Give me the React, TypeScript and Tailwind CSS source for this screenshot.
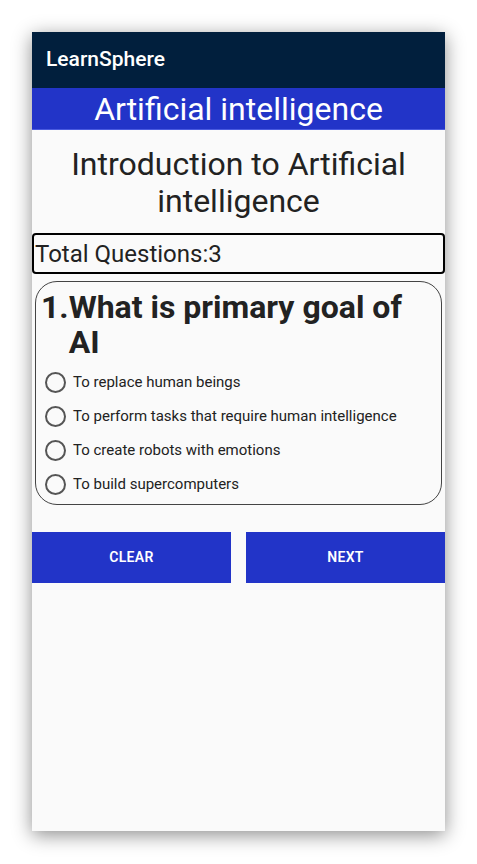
const options = [
  "To replace human beings",
  "To perform tasks that require human intelligence",
  "To create robots with emotions",
  "To build supercomputers",
];

export default function App() {
  return (
    <div
      className="w-[477px] h-[864px] bg-white pt-[32px] pl-[32px]"
      style={{ fontFamily: "Roboto, 'Liberation Sans', sans-serif" }}
    >
      <div className="w-[413px] h-[799px] bg-[#fafafa] shadow-[0_4px_18px_rgba(0,0,0,0.45)] flex flex-col">
        <div className="h-[56px] bg-[#011f3d] flex items-center pl-[14px]">
          <span className="text-white text-[21px] font-medium">LearnSphere</span>
        </div>
        <div className="h-[42px] bg-[#2234c8] flex items-center justify-center border-b border-[#4a5be0]">
          <span className="text-white text-[32px] leading-none">Artificial intelligence</span>
        </div>
        <h1 className="text-[32px] leading-[37px] text-[#222] text-center px-4 pt-[16px]">
          Introduction to Artificial intelligence
        </h1>
        <div className="mt-[13px] h-[41px] border-2 border-black rounded-[4px] flex items-center pl-[1px]">
          <span className="text-[24px] text-[#222]">Total Questions:3</span>
        </div>
        <div className="mx-[3px] mt-[7px] h-[224px] border-[1.5px] border-[#444] rounded-[22px] pl-[5px] pr-[14px] pt-[8px]">
          <div className="flex text-[32px] leading-[35px] font-bold text-[#222]">
            <span>1.</span>
            <span>What is primary goal of AI</span>
          </div>
          <div className="mt-[5px] flex flex-col">
            {options.map((o) => (
              <label key={o} className="h-[34px] flex items-center gap-[7px] pl-[4px]">
                <span className="w-[21px] h-[21px] rounded-full border-2 border-[#555]" />
                <span className="text-[15px] text-[#222] whitespace-nowrap">{o}</span>
              </label>
            ))}
          </div>
        </div>
        <div className="mt-[27px] flex gap-[15px]">
          <button className="flex-1 h-[51px] bg-[#2234c8] text-white text-[14px] font-semibold tracking-wide">
            CLEAR
          </button>
          <button className="flex-1 h-[51px] bg-[#2234c8] text-white text-[14px] font-semibold tracking-wide">
            NEXT
          </button>
        </div>
      </div>
    </div>
  );
}
